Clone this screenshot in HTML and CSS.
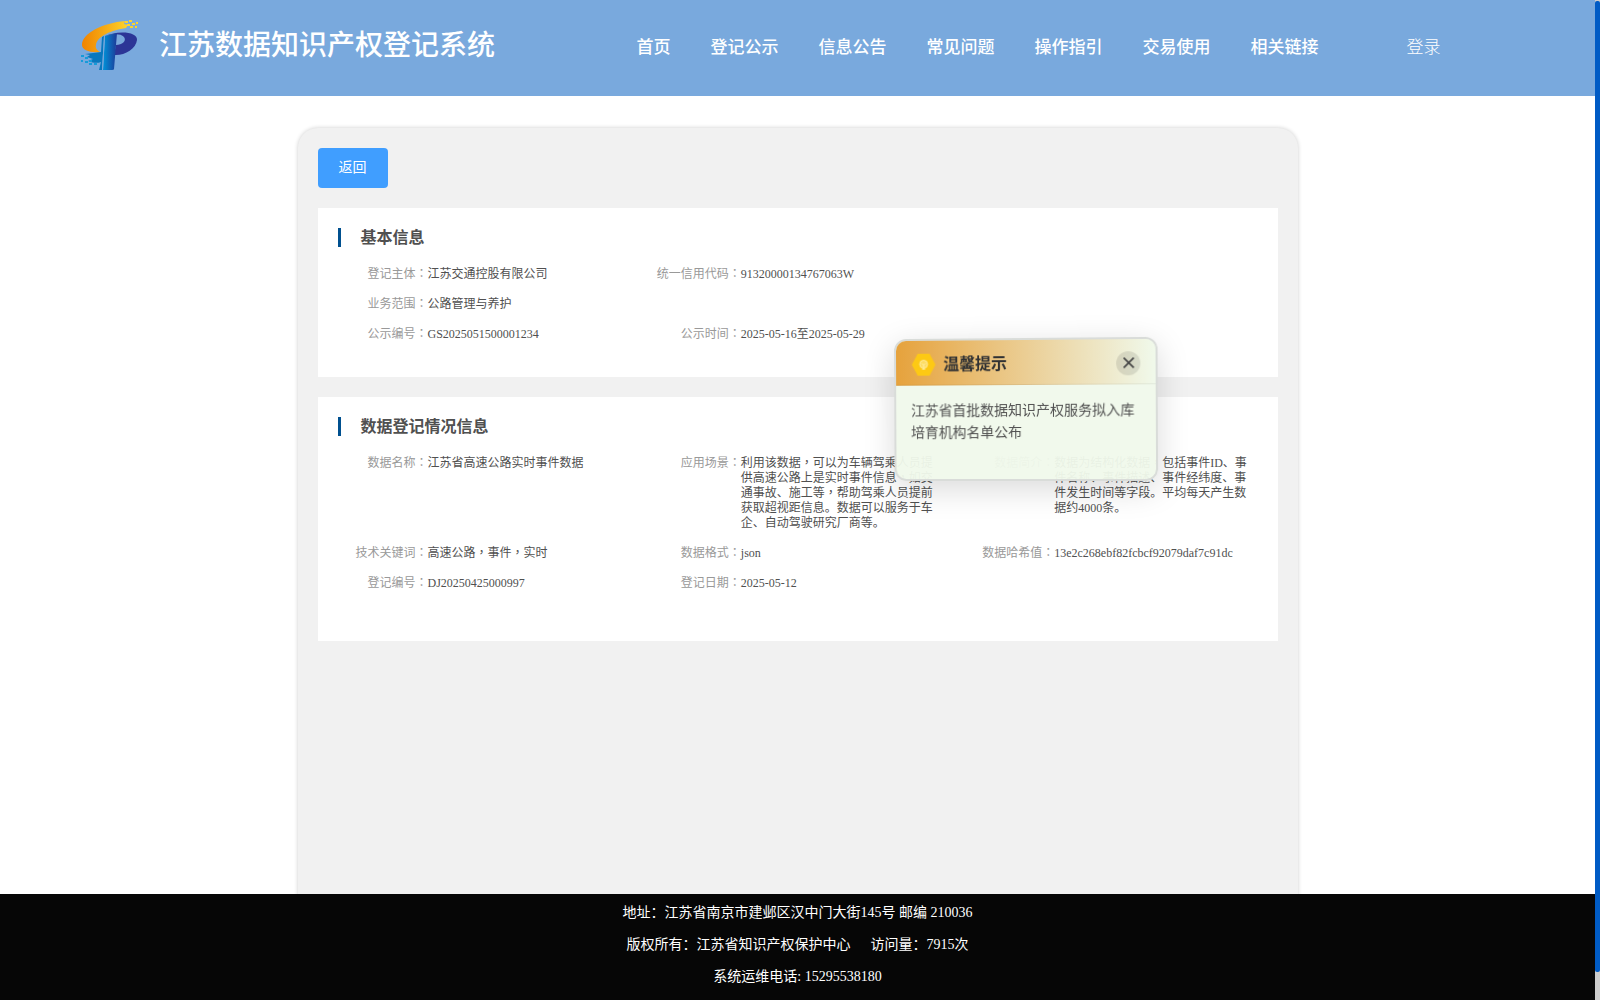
FILE: index.html
```html
<!DOCTYPE html>
<html lang="zh-CN">

<head>
	<meta charset="utf-8">
	<title>江苏数据知识产权登记系统</title>
	<link rel="stylesheet" href="styles.css">
</head>

<body>
	<div class="page">
		<header class="header">
			<svg class="header__logo" viewBox="0 0 60 52">
				<defs>
					<linearGradient id="orange" x1="0" x2="1">
						<stop offset="0" stop-color="#f08300" />
						<stop offset="1" stop-color="#fdd32b" />
					</linearGradient>
					<linearGradient id="blue" x1="0" x2="1">
						<stop offset="0" stop-color="#0092d8" />
						<stop offset="1" stop-color="#1d3a98" />
					</linearGradient>
				</defs>
				<path fill="url(#orange)" d="M45 2 C23 4 2 14 2 26 C2 31 10 34 20 33 C17 31 15 29 16 26 C17 17 32 11 46 9 L48 6 L44 5 Z" />
				<path fill="#fdd32b" d="M45 2h3v2h-3zM49 1h3v2h-3zM47 5h3v2h-3zM52 4h3v2h-3zM56 3h2v2h-2zM50 7h3v2h-3zM55 7h2v2h-2z" />
				<path fill="#2c3596" d="M23 18 C36 11 58 12 57 21 C56 30 44 37 34 36 L36 26 C42 26 47 22 44 18 C40 14 31 15 23 18 Z" />
				<path fill="url(#blue)" d="M25 17 L37 14 L34 50 Q34 51 32 51 L23 51 Z" />
				<path fill="#0878be" d="M22 18 L24 17 L22 51 L19 51 L21 43 C16 45 11 43 8 42 L13 40 L7 38 L10 36 L5 35 L21 33 Z" />
				<path fill="#169bd9" d="M1 36h3v2h-3zM5 38h3v2h-3zM1 41h2v2h-2zM5 42h3v2h-3zM9 41h3v2h-3zM9 44h3v2h-3zM14 44h3v2h-3z" />
				<path fill="none" stroke="#79a9dd" stroke-width="1" d="M24.5 17 L22.5 51" />
			</svg>
			<h1 class="header__title">江苏数据知识产权登记系统</h1>
			<nav class="nav">
				<a class="nav__item">首页</a>
				<a class="nav__item">登记公示</a>
				<a class="nav__item">信息公告</a>
				<a class="nav__item">常见问题</a>
				<a class="nav__item">操作指引</a>
				<a class="nav__item">交易使用</a>
				<a class="nav__item">相关链接</a>
			</nav>
			<a class="header__login">登录</a>
		</header>

		<main class="main">
			<div class="container">
				<button type="button" class="button">返回</button>

				<section class="card">
					<h2 class="card__title">基本信息</h2>
					<div class="info">
						<div class="info__item"><span class="info__label">登记主体</span><span class="info__value">江苏交通控股有限公司</span></div>
						<div class="info__item info__item--wide"><span class="info__label">统一信用代码</span><span class="info__value">91320000134767063W</span></div>
						<div class="info__item info__item--full"><span class="info__label">业务范围</span><span class="info__value">公路管理与养护</span></div>
						<div class="info__item"><span class="info__label">公示编号</span><span class="info__value">GS2025051500001234</span></div>
						<div class="info__item info__item--wide"><span class="info__label">公示时间</span><span class="info__value">2025-05-16至2025-05-29</span></div>
					</div>
				</section>

				<section class="card card--data">
					<h2 class="card__title">数据登记情况信息</h2>
					<div class="info">
						<div class="info__item"><span class="info__label">数据名称</span><span class="info__value">江苏省高速公路实时事件数据</span></div>
						<div class="info__item"><span class="info__label">应用场景</span><span class="info__value">利用该数据<i class="comma">，</i>可以为车辆驾乘人员提供高速公路上是实时事件信息<i class="comma">，</i>如交通事故、施工等<i class="comma">，</i>帮助驾乘人员提前获取超视距信息。数据可以服务于车企、自动驾驶研究厂商等。</span></div>
						<div class="info__item"><span class="info__label">数据简介</span><span class="info__value">数据为结构化数据<i class="comma">，</i>包括事件ID、事件名称、事件描述、事件经纬度、事件发生时间等字段。平均每天产生数据约4000条。</span></div>
						<div class="info__item"><span class="info__label">技术关键词</span><span class="info__value">高速公路<i class="comma">，</i>事件<i class="comma">，</i>实时</span></div>
						<div class="info__item"><span class="info__label">数据格式</span><span class="info__value">json</span></div>
						<div class="info__item"><span class="info__label">数据哈希值</span><span class="info__value">13e2c268ebf82fcbcf92079daf7c91dc</span></div>
						<div class="info__item"><span class="info__label">登记编号</span><span class="info__value">DJ20250425000997</span></div>
						<div class="info__item"><span class="info__label">登记日期</span><span class="info__value">2025-05-12</span></div>
					</div>
				</section>
			</div>
		</main>

		<footer class="footer">
			<p>地址：江苏省南京市建邺区汉中门大街145号 邮编 210036</p>
			<p>版权所有：江苏省知识产权保护中心<span class="footer__visits">访问量：7915次</span></p>
			<p>系统运维电话: 15295538180</p>
		</footer>
	</div>
	<div class="scrollbar">
		<div class="scrollbar__thumb"></div>
	</div>

	<div class="notice">
		<div class="notice__header">
			<svg class="notice__icon" viewBox="0 0 24 24">
				<path fill="#fdc914" d="M6 1h12l6 11-6 11H6L0 12z" />
				<circle cx="12" cy="11.500" r="4" fill="#fddc62" stroke="#fff0b0" stroke-width=".8" />
				<path fill="none" stroke="#fff0b0" stroke-width=".9" d="M10 10.500l2 2 2-2M12 12.500v3M10.500 16.500h3" />
			</svg>
			<h3 class="notice__title">温馨提示</h3>
			<button type="button" class="notice__close">
				<svg viewBox="0 0 10 10" width="11" height="11">
					<path d="M.5.5l9 9M9.500.5l-9 9" stroke="#444" stroke-width="1.5" />
				</svg>
			</button>
		</div>
		<p class="notice__text">江苏省首批数据知识产权服务拟入库培育机构名单公布</p>
	</div>
</body>

</html>
```
FILE: styles.css
```css
* {
	margin: 0;
	padding: 0;
	box-sizing: border-box;
}

body {
	display: flex;
	width: 100vw;
	height: 100vh;
	overflow: hidden;
	background-color: #fff;
	font-family: "Liberation Serif", "Noto Sans CJK SC", serif;
}

button {
	border: none;
	font-family: inherit;
}

.page {
	flex: 1;
	display: flex;
	flex-direction: column;
	height: 100%;
}

.scrollbar {
	width: 5px;
	height: 100%;
	padding-top: 1px;
	background-color: #ccc;
}

.scrollbar__thumb {
	height: 971px;
	border-radius: 2px;
	background-color: #005bc5;
}

.header {
	display: flex;
	align-items: center;
	flex-shrink: 0;
	height: 96px;
	padding-left: 80px;
	background-color: #79a9dd;
	color: #fff;
}

.header__logo {
	width: 60px;
	height: 52px;
	margin-top: -6px;
}

.header__title {
	width: 477.5px;
	margin: -4px 0 0 19px;
	font-size: 28px;
	line-height: 40px;
	font-weight: 500;
}

.nav {
	display: flex;
	gap: 40px;
}

.nav__item {
	font-size: 17px;
	line-height: 24px;
	font-weight: 500;
}

.header__login {
	margin-left: 88px;
	font-size: 17px;
	line-height: 24px;
	font-weight: 300;
}

.main {
	flex: 1;
	min-height: 0;
	padding-top: 32px;
	overflow: hidden;
}

.container {
	width: 1000px;
	height: 900px;
	margin: 0 auto;
	padding: 20px;
	border-radius: 20px;
	background-color: #f1f1f1;
	box-shadow: 0 0 4px rgba(0, 0, 0, 0.2);
}

.button {
	display: block;
	width: 70px;
	height: 40px;
	border-radius: 4px;
	background-color: #409eff;
	color: #fff;
	font-size: 14px;
	line-height: 40px;
}

.card {
	height: 169px;
	margin-top: 20px;
	padding: 20px 0 0 20px;
	background-color: #fff;
}

.card--data {
	height: 244px;
}

.card__title {
	height: 19px;
	padding-left: 20px;
	border-left: 3px solid #00508f;
	color: #505050;
	font-size: 16px;
	line-height: 20px;
}

.info {
	display: grid;
	grid-template-columns: repeat(3, 1fr);
	row-gap: 15px;
	margin-top: 20px;
	font-size: 12px;
	line-height: 15px;
}

.info__item {
	display: flex;
}

.info__item--wide {
	grid-column: span 2;
}

.info__item--full {
	grid-column: span 3;
}

.info__label {
	width: 90px;
	flex-shrink: 0;
	color: #999;
	text-align: right;
}

.info__label::after {
	content: "：";
}

.info__value {
	width: 194px;
	color: #505050;
}

/* centred full-width punctuation */
.comma,
.info__label::after {
	font-family: "Noto Sans CJK TC", sans-serif;
	font-feature-settings: "locl" 0;
	font-style: normal;
	line-height: 0;
}

.footer {
	flex-shrink: 0;
	height: 106px;
	padding-top: 3px;
	background-color: #060606;
	color: #fff;
	font-size: 14px;
	line-height: 32px;
	text-align: center;
}

.footer__visits {
	margin-left: 20px;
}

.notice {
	position: absolute;
	left: 893px;
	top: 337.5px;
	width: 264px;
	height: 143px;
	border: 2px solid #d9dcd9;
	border-radius: 12px;
	overflow: hidden;
	background-color: rgba(240, 249, 235, 0.95);
	box-shadow: 0 8px 32px rgba(0, 0, 0, 0.15);
	transform: perspective(1000px) rotateY(-3.5deg) rotateZ(-0.25deg);
}

.notice__header {
	display: flex;
	align-items: center;
	height: 45px;
	padding: 3px 15px 0 16px;
	border-bottom: 1px solid rgba(0, 0, 0, 0.06);
	background: linear-gradient(90deg, #e6a23c, #f0f9eb);
}

.notice__icon {
	width: 24px;
	height: 24px;
}

.notice__title {
	flex: 1;
	margin-left: 8px;
	color: #303133;
	font-size: 16px;
	line-height: 26px;
}

.notice__close {
	display: flex;
	align-items: center;
	justify-content: center;
	width: 24px;
	height: 24px;
	border-radius: 50%;
	background-color: rgba(0, 0, 0, 0.1);
}

.notice__text {
	padding: 15px;
	color: #505050;
	font-size: 14px;
	line-height: 22.4px;
}
```
